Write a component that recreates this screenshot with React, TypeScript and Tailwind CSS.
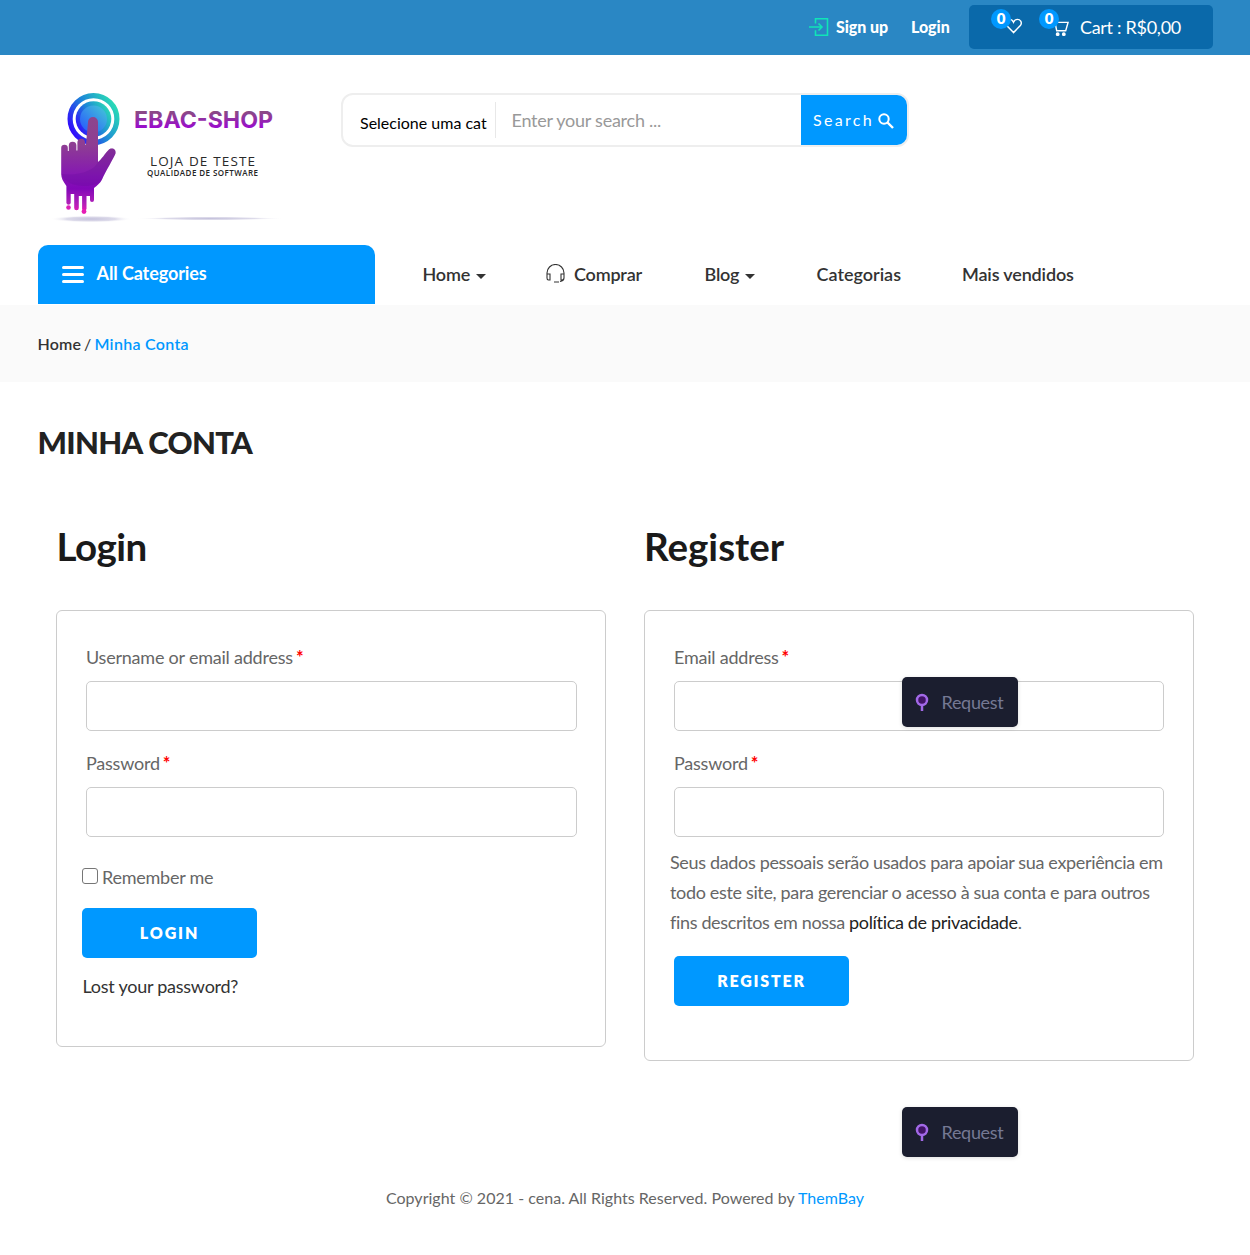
import React from 'react';

function Logo() {
  return (
    <svg width="250" height="150" viewBox="0 0 250 150" className="block" role="img" aria-label="EBAC-SHOP">
      <defs>
        <linearGradient id="ring" x1="0" y1="0.8" x2="1" y2="0.2">
          <stop offset="0" stopColor="#3200ff" />
          <stop offset="0.5" stopColor="#1d86d8" />
          <stop offset="1" stopColor="#2be0b4" />
        </linearGradient>
        <linearGradient id="disc" x1="0" y1="1" x2="1" y2="0">
          <stop offset="0" stopColor="#2853ff" />
          <stop offset="1" stopColor="#43cbd5" />
        </linearGradient>
        <linearGradient id="hand" x1="0" y1="36" x2="0" y2="133" gradientUnits="userSpaceOnUse">
          <stop offset="0" stopColor="#8d468c" />
          <stop offset="0.3" stopColor="#8e3d93" />
          <stop offset="0.62" stopColor="#8516b4" />
          <stop offset="0.75" stopColor="#8207b8" />
          <stop offset="0.9" stopColor="#b020b8" />
          <stop offset="1" stopColor="#ee18b6" />
        </linearGradient>
        <linearGradient id="brand" x1="0" y1="0" x2="0" y2="1">
          <stop offset="0.25" stopColor="#8b4a86" />
          <stop offset="0.8" stopColor="#9b09d0" />
        </linearGradient>
        <radialGradient id="shade">
          <stop offset="0" stopColor="#c5c2dc" />
          <stop offset="0.6" stopColor="#dddbea" />
          <stop offset="1" stopColor="#ffffff" stopOpacity="0" />
        </radialGradient>
      </defs>
      <ellipse cx="51" cy="139" rx="41" ry="3.500" fill="url(#shade)" />
      <ellipse cx="170" cy="138.500" rx="74" ry="1.800" fill="url(#shade)" />
      <circle cx="53.500" cy="39" r="23.400" fill="none" stroke="url(#ring)" strokeWidth="5.200" />
      <circle cx="53.500" cy="39" r="17.800" fill="url(#ring)" />
      <circle cx="53.500" cy="39" r="13.500" fill="url(#disc)" />
      <path
        fill="url(#hand)"
        d="M48 42a5 5 0 0 1 10 0v40c3-2 7.500-9 10.500-12 3-3 8-1 7 3.500-2 5-10 18-13.500 26-2 4-5 6-8 8.500v12a2 2 0 0 1-4 0v-4h-3.500v13a2.300 2.300 0 0 1-4.400 0v-13h-3.300v12a2.300 2.300 0 0 1-4.600 0v-14h-3.500v9a2.200 2.200 0 0 1-4.300 0v-17c-3.500-5-5.200-8-5.200-12V68a3.300 3.300 0 0 1 6.600 0v3h1V65.500a3.800 3.800 0 0 1 7.600 0v5h1v-8a3.800 3.800 0 0 1 7.600 0v2h1z"
      />
      <path fill="#620b97" fillOpacity=".24" d="M21.500 94c18 2 32-3 36.500-12 3-2 7.500-9 10.500-12 3-3 8-1 7 3.500-2 5-10 18-13.500 26-4 9-36 10-40.500-5.500z" />
      <circle cx="28.500" cy="127.500" r="2.300" fill="#dc20b8" />
      <circle cx="44" cy="131.500" r="2.400" fill="#e51db4" />
      <text x="94" y="48" textLength="139" lengthAdjust="spacingAndGlyphs" fontFamily="Inter, sans-serif" fontWeight="700" fontSize="23.500" fill="url(#brand)">EBAC-SHOP</text>
      <text x="110" y="85.500" textLength="105" lengthAdjust="spacing" fontFamily="'Open Sans', sans-serif" fontSize="13.500" fill="#292929">LOJA DE TESTE</text>
      <text x="107" y="96" textLength="111" fontFamily="'Open Sans', sans-serif" fontWeight="600" fontSize="8" fill="#252525">QUALIDADE DE SOFTWARE</text>
    </svg>
  );
}

function Badge() {
  return (
    <span className="absolute -left-[14px] -top-[9px] flex size-5 items-center justify-center rounded-full bg-[#0098ff] pb-px text-[15px] font-extrabold leading-none">0</span>
  );
}

function TopBar() {
  return (
    <header className="flex h-[55px] items-center justify-end bg-[#2a87c4] pr-[37px] pb-px text-white">
      <a className="flex items-center gap-[7px] text-[16px] font-black tracking-[-0.05px]">
        <svg width="20" height="20" viewBox="0 0 20 20" fill="none" stroke="#10e5b7" strokeWidth="1.600">
          <path d="M6.500 6.500V1.700h12v16.600h-12v-5M0 10h13M9.500 6.500 13 10l-3.500 3.500" />
        </svg>
        <span className="w-[53px] whitespace-nowrap">Sign up</span>
      </a>
      <a className="ml-[22px] w-[39px] text-[16px] font-black tracking-[-0.05px]">Login</a>
      <div className="ml-[19px] flex h-11 w-[244px] items-center rounded-[5px] bg-[#0a69aa] pl-9">
        <span className="relative -mt-[2px]">
          <svg width="17" height="16" viewBox="0 0 18 16" className="block" fill="none" stroke="white" strokeWidth="1.500">
            <path d="M9 15 1.500 7.200C-.5 4 2 1 4.800 1 7 1 8.300 2.500 9 4c.7-1.500 2-3 4.200-3C16 1 18.500 4 16.500 7.200Z" />
          </svg>
          <Badge />
        </span>
        <span className="relative ml-[30px] mt-[2px]">
          <svg width="17" height="17" viewBox="0 0 18 17" className="block" fill="none" stroke="white" strokeWidth="1.500">
            <path d="M0 1.200h3l2 9.600h9.500L17 2H3.200" />
            <circle cx="6" cy="14.500" r="1.300" fill="white" />
            <circle cx="12.500" cy="14.500" r="1.300" fill="white" />
          </svg>
          <span className="absolute left-px -top-[2px]"><Badge /></span>
        </span>
        <span className="ml-[11px] mt-px whitespace-nowrap text-[18px] tracking-[-0.3px]">Cart : R$0,00</span>
      </div>
    </header>
  );
}

function SearchBar() {
  return (
    <div className="mt-[38px] flex h-[54px] w-[568px] rounded-[12px] border-2 border-[#eeeeee]">
      <div className="my-[7px] flex w-[153px] shrink-0 items-center border-r border-[#e8e8e8] pl-[17px] pt-[6px] text-[16px] text-black">
        <span className="whitespace-nowrap">Selecione uma cat</span>
      </div>
      <div className="flex flex-1 items-center pl-[15.500px] text-[18px] tracking-[-0.25px] text-[#999999]">Enter your search ...</div>
      <button className="flex w-[106px] items-center gap-1 rounded-r-[10px] bg-[#0098ff] pl-3 text-[16px] tracking-[2.300px] text-white">
        Search
        <svg width="16" height="16" viewBox="0 0 16 16" className="mt-[2px]" fill="none" stroke="white" strokeWidth="2">
          <circle cx="6" cy="6" r="4.700" />
          <path d="m9.500 9.500 5.500 5.500" strokeWidth="2.400" />
        </svg>
      </button>
    </div>
  );
}

function Caret() {
  return <span className="ml-[6px] mt-[4px] border-x-[5px] border-t-[5px] border-x-transparent border-t-[#333]" />;
}

function Nav() {
  return (
    <nav className="flex h-[60px] pl-[38px] text-[18px] font-semibold tracking-[-0.2px] text-[#333]">
      <div className="flex h-[59px] w-[337px] items-center rounded-t-[10px] bg-[#0098ff] pl-6 pb-[2px] text-white">
        <span className="mt-[2px] flex w-[22px] flex-col gap-1">
          <span className="h-[3px] rounded bg-white" />
          <span className="h-[3px] rounded bg-white" />
          <span className="h-[3px] rounded bg-white" />
        </span>
        <span className="ml-[12.500px] font-bold tracking-[-0.1px]">All Categories</span>
      </div>
      <div className="ml-[47.500px] flex h-[59px] w-[123.500px] items-center pb-px">Home<Caret /></div>
      <div className="flex h-[59px] w-[158.500px] items-center pb-px">
        <svg width="19" height="19" viewBox="0 0 19 19" className="mr-[9px] mt-[-2px]" fill="none" stroke="#333" strokeWidth="1.100">
          <path d="M1 11V9a8.500 8.500 0 0 1 17 0v5q0 3-4 3.500M1 10h3v6H2.500Q1 16 1 14ZM18 10h-3v6h1.500q1.500-1 1.500-2ZM8 18h5" />
        </svg>
        Comprar
      </div>
      <div className="flex h-[59px] w-[112px] items-center pb-px">Blog<Caret /></div>
      <div className="flex h-[59px] w-[145.500px] items-center pb-px tracking-[0px]">Categorias</div>
      <div className="flex h-[59px] items-center pb-px tracking-[-0.15px]">Mais vendidos</div>
    </nav>
  );
}

function Field({ label, id }: { label: string; id: string }) {
  return (
    <div className="h-[106px]">
      <label htmlFor={id} className="block h-[38px] leading-[28px] tracking-[-0.22px]">
        {label}<span className="ml-[3px] font-bold text-[#ff0000]">*</span>
      </label>
      <input id={id} className="block h-[50px] w-full rounded-[5px] border border-[#cccccc] bg-white px-3 outline-none" />
    </div>
  );
}

function RequestTag() {
  return (
    <div className="flex h-[50px] w-[116px] items-center rounded-[5px] bg-[#1b1e2f] pl-[13px] text-[18px] text-[#757994] shadow-[0_1px_4px_#0002]">
      <svg width="14" height="19" viewBox="0 0 14 19" fill="none" stroke="#a269e8" strokeWidth="2.500">
        <circle cx="7" cy="7" r="5" fill="#411365" />
        <path d="M7 12v6" />
      </svg>
      <span className="ml-[12.500px] pt-px tracking-[-0.3px]">Request</span>
    </div>
  );
}

export default function App() {
  return (
    <div className="h-[1255px] w-[1250px] overflow-hidden bg-white font-['Lato',sans-serif] text-[18px] text-[#666]">
      <TopBar />
      <div className="flex h-[190px]">
        <div className="w-[341px] pl-10 pt-[25px]"><Logo /></div>
        <SearchBar />
      </div>
      <Nav />
      <div className="flex h-[77px] items-center bg-[#fafafa] pl-[37.500px] text-[16px] font-semibold tracking-[0.15px]">
        <span className="text-[#333]">Home</span>
        <span className="mx-[3px] font-normal text-[#333]">/</span>
        <span className="tracking-[0.3px] text-[#0098ff]">Minha Conta</span>
      </div>
      <h1 className="mt-[40px] pl-[37.500px] text-[31px] font-black leading-[40px] tracking-[-0.7px] text-[#222]">MINHA CONTA</h1>
      <main className="mt-[61px] flex items-start gap-[38px] pl-14">
        <section className="w-[550px]">
          <h2 className="h-[87px] pl-[0.500px] text-[38.500px] font-bold leading-[47px] tracking-[-0.5px] text-[#1a1a1a]">Login</h2>
          <div className="h-[437px] rounded-[6px] border border-[#cccccc] pl-[25px] pr-7 pt-8">
            <div className="pl-1">
              <Field label="Username or email address" id="username" />
              <Field label="Password" id="login-password" />
            </div>
            <label className="mt-[7px] flex h-[30px] items-center tracking-[-0.25px]">
              <input type="checkbox" className="mr-1 mt-[-3px] size-4 shrink-0 appearance-none rounded-[3px] border border-[#767676] bg-white" />
              Remember me
            </label>
            <button className="mt-[16px] block h-[50px] w-[175px] rounded-[5px] bg-[#0098ff] pb-px text-[16px] font-extrabold tracking-[1.900px] text-white">LOGIN</button>
            <a className="mt-[13px] block pl-[0.500px] leading-[30px] tracking-[-0.25px] text-[#333]">Lost your password?</a>
          </div>
        </section>
        <section className="w-[550px]">
          <h2 className="h-[87px] text-[38.500px] font-bold leading-[47px] tracking-[0px] text-[#1a1a1a]">Register</h2>
          <div className="h-[451px] rounded-[6px] border border-[#cccccc] pl-[25px] pr-[29px] pt-8">
            <div className="relative pl-1">
              <Field label="Email address" id="email" />
              <Field label="Password" id="register-password" />
              <div className="absolute left-[232px] top-[34px]"><RequestTag /></div>
            </div>
            <p className="mt-[-8px] whitespace-nowrap leading-[30px] tracking-[-0.34px]">
              Seus dados pessoais serão usados para apoiar sua experiência em<br />
              todo este site, para gerenciar o acesso à sua conta e para outros<br />
              fins descritos em nossa <a className="text-[#222]">política de privacidade</a>.
            </p>
            <button className="ml-1 mt-[19px] block h-[50px] w-[175px] rounded-[5px] bg-[#0098ff] pb-px text-[16px] font-extrabold tracking-[1.800px] text-white">REGISTER</button>
          </div>
        </section>
      </main>
      <div className="mt-[46px] pl-[902px]"><RequestTag /></div>
      <footer className="mt-[29px] text-center text-[16px] leading-6 tracking-[0.02px]">
        Copyright © 2021 - cena. All Rights Reserved. Powered by <a className="text-[#0098ff]">ThemBay</a>
      </footer>
    </div>
  );
}
